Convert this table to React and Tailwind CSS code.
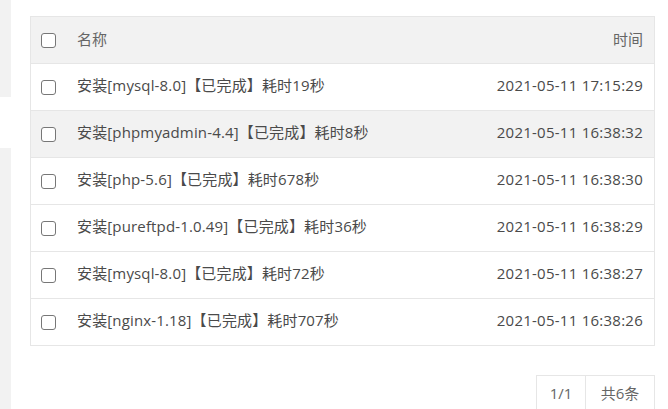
import React from "react";

const logs = [
  { name: "安装[mysql-8.0]【已完成】耗时19秒", time: "2021-05-11 17:15:29" },
  { name: "安装[phpmyadmin-4.4]【已完成】耗时8秒", time: "2021-05-11 16:38:32", hover: true },
  { name: "安装[php-5.6]【已完成】耗时678秒", time: "2021-05-11 16:38:30" },
  { name: "安装[pureftpd-1.0.49]【已完成】耗时36秒", time: "2021-05-11 16:38:29" },
  { name: "安装[mysql-8.0]【已完成】耗时72秒", time: "2021-05-11 16:38:27" },
  { name: "安装[nginx-1.18]【已完成】耗时707秒", time: "2021-05-11 16:38:26" },
];

const Checkbox = () => (
  <span className="block w-[15px] h-[15px] border border-[#777] rounded-[3px] bg-white shrink-0" />
);

const App = () => {
  return (
    <div
      className="flex w-[668px] h-[409px] bg-white overflow-hidden text-[15px]"
      style={{ fontFamily: '"Open Sans", "Noto Sans CJK SC", sans-serif' }}
    >
      {/* left strip */}
      <div className="w-[11px] flex flex-col shrink-0">
        <div className="h-[97px] bg-[#f2f2f2]" />
        <div className="h-[51px]" />
        <div className="flex-1 bg-[#f2f2f2]" />
      </div>

      <div className="ml-[19px] pt-[16px] w-[625px]">
        {/* Table */}
        <div className="border-t border-l border-r border-[#e6e6e6]">
          <div className="h-[47px] flex items-center border-b border-[#e6e6e6] bg-[#f2f2f2] pl-[10px] pr-[11px] text-[#666]">
            <Checkbox />
            <span className="ml-[21px] flex-1 -mt-[2px]">名称</span>
            <span className="-mt-[2px]">时间</span>
          </div>
          {logs.map((log, i) => (
            <div
              key={i}
              className={
                "h-[47px] flex items-center border-b border-[#e6e6e6] pl-[10px] pr-[11px] text-[#4a4a4a] " +
                (log.hover ? "bg-[#f2f2f2]" : "bg-white")
              }
            >
              <Checkbox />
              <span className="ml-[21px] flex-1 -mt-[3px] tracking-[0.15px]">{log.name}</span>
              <span className="-mt-[3px] tracking-[0.25px]">{log.time}</span>
            </div>
          ))}
        </div>

        {/* Pagination */}
        <div className="flex justify-end mt-[29px]">
          <div className="flex border border-[#e6e6e6] text-[#666]">
            <span className="h-[34px] w-[49px] flex items-center justify-center border-r border-[#e6e6e6]">
              1/1
            </span>
            <span className="h-[34px] w-[68px] flex items-center justify-center">共6条</span>
          </div>
        </div>
      </div>
    </div>
  );
};

export default App;
